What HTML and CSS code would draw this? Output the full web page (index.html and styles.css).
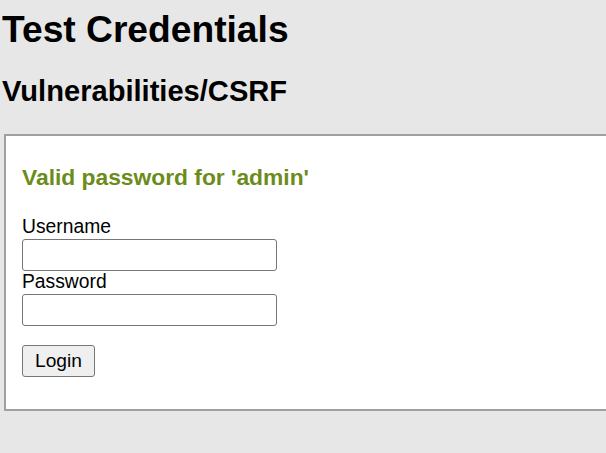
FILE: index.html
```html
<!DOCTYPE html>
<html>
<head>
<meta charset="utf-8">
<title>Test Credentials</title>
<link rel="stylesheet" href="styles.css">
</head>
<body>
<div class="page">
  <h1 class="title">Test Credentials</h1>
  <h2 class="subtitle">Vulnerabilities/CSRF</h2>
  <div class="code-area">
    <h3 class="message">Valid password for 'admin'</h3>
    <form class="login-form">
      <label class="field-label" for="username">Username</label>
      <input class="field-input" type="text" id="username" name="username">
      <label class="field-label" for="password">Password</label>
      <input class="field-input" type="password" id="password" name="password">
      <button class="login-button" type="button">Login</button>
    </form>
  </div>
</div>
</body>
</html>
```

FILE: styles.css
```css
html, body {
  margin: 0;
  padding: 0;
  overflow: hidden;
}

body {
  background: #e7e7e7;
  font-family: "Liberation Sans", Arial, sans-serif;
  color: #000;
  width: 606px;
  height: 453px;
}

.page {
  padding-top: 8.5px;
}

.title {
  margin: 0 0 0 2px;
  font-size: 37.2px;
  font-weight: bold;
  line-height: 41.9px;
}

.subtitle {
  margin: 24.6px 0 0 2px;
  font-size: 29.1px;
  font-weight: bold;
  line-height: 33.3px;
}

.code-area {
  margin: 25.7px 0 0 4px;
  background: #fff;
  border: 2px solid #a0a0a0;
  border-right: none;
  padding: 29.4px 0 0 16px;
  height: 244px;
  box-sizing: content-box;
}

.message {
  margin: 0;
  font-size: 22.8px;
  font-weight: bold;
  line-height: 25.7px;
  color: #6b8c1b;
}

.login-form {
  margin-top: 25px;
  display: flex;
  flex-direction: column;
  align-items: flex-start;
}

.field-label {
  font-size: 19.3px;
  line-height: 22.1px;
}

.field-input {
  box-sizing: border-box;
  width: 255px;
  height: 32px;
  margin: 1px 0 0 0;
  border: 1px solid #767676;
  border-radius: 3px;
  background: #fff;
  padding: 1px 3px;
  font-size: 19.2px;
  font-family: inherit;
}

.login-button {
  box-sizing: border-box;
  margin-top: 18.5px;
  height: 32px;
  padding: 0 12px;
  font-size: 19.2px;
  font-family: "Liberation Sans", Arial, sans-serif;
  line-height: 22px;
  color: #000;
  background: #efefef;
  border: 1px solid #767676;
  border-radius: 3px;
}
```
